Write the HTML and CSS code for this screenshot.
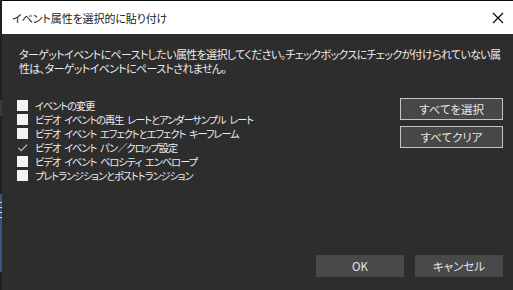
FILE: index.html
```html
<!DOCTYPE html>
<html lang="ja">
<head>
<meta charset="utf-8">
<link rel="stylesheet" href="styles.css">
</head>
<body>
<div class="edge">
  <div class="edge-a"></div>
  <div class="edge-b"></div>
  <div class="edge-c"></div>
  <div class="edge-d"><i></i><i></i><i></i><i></i></div>
</div>
<div class="dialog">
  <div class="titlebar">
    <span class="title">イベント属性を選択的に貼り付け</span>
    <svg class="close" width="12" height="12" viewBox="0 0 12 12"><path d="M1 1 L11 11 M11 1 L1 11" stroke="#000" stroke-width="1.1" fill="none"/></svg>
  </div>
  <div class="content">
    <p class="desc">ターゲットイベントにペーストしたい属性を選択してください。チェックボックスにチェックが付けられていない属<br>性は、ターゲットイベントにペーストされません。</p>
    <div class="main">
      <ul class="list">
        <li><span class="box"></span>イベントの変更</li>
        <li><span class="box"></span>ビデオ イベントの再生 レートとアンダーサンプル レート</li>
        <li><span class="box"></span>ビデオ イベント エフェクトとエフェクト キーフレーム</li>
        <li><span class="box checked"><svg width="12" height="11" viewBox="0 0 12 11"><path d="M1.5 6 L4.5 9 L11 2.5" stroke="#bdbdbd" stroke-width="1.2" fill="none"/></svg></span>ビデオ イベント パン／クロップ設定</li>
        <li><span class="box"></span>ビデオ イベント ベロシティ エンベロープ</li>
        <li><span class="box"></span>プレトランジションとポストトランジション</li>
      </ul>
      <div class="side">
        <button class="btn outline">すべてを選択</button>
        <button class="btn outline">すべてクリア</button>
      </div>
    </div>
    <div class="footer">
      <button class="btn">OK</button>
      <button class="btn">キャンセル</button>
    </div>
  </div>
</div>
</body>
</html>
```
FILE: styles.css
```css
html, body {
  margin: 0;
  padding: 0;
}
body {
  width: 513px;
  height: 290px;
  display: flex;
  background: #1c1c1c;
  overflow: hidden;
  font-family: "Noto Sans CJK JP", "Noto Sans", sans-serif;
  font-feature-settings: "palt";
}
.edge {
  width: 2px;
  flex: none;
  display: flex;
  flex-direction: column;
  background: #202020;
}
.edge-a { height: 100px; }
.edge-b { height: 16px; background: #3a3a3a; }
.edge-c { height: 78px; }
.edge-d {
  height: 70px;
  background: #3d5183;
  display: flex;
  flex-direction: column;
  gap: 4px;
  padding-top: 8px;
}
.edge-d i {
  display: block;
  height: 1px;
  background: #d0d0d0;
}
.dialog {
  flex: 1;
  min-width: 0;
  overflow: hidden;
  display: flex;
  flex-direction: column;
  border-top: 1px solid #0a0a0a;
}
.titlebar {
  height: 33px;
  background: #ffffff;
  display: flex;
  align-items: center;
  justify-content: space-between;
  padding: 0 9px 0 10px;
}
.title {
  font-size: 11px;
  color: #1a1a1a;
  letter-spacing: -0.1px;
}
.close {
  display: block;
}
.content {
  flex: 1;
  min-width: 0;
  background: #2d2d2d;
  display: flex;
  flex-direction: column;
  padding: 13px 10px 13px 17px;
  color: #ececec;
  font-size: 11px;
}
.desc {
  margin: 0;
  line-height: 14px;
  white-space: nowrap;
  letter-spacing: -0.65px;
}
.main {
  display: flex;
  justify-content: space-between;
  margin-top: 23px;
}
.list {
  list-style: none;
  margin: 1px 0 0 -2px;
  padding: 0;
}
.list li {
  display: flex;
  align-items: center;
  height: 13.9px;
  white-space: pre;
  font-size: 10.2px;
  letter-spacing: -1px;
  word-spacing: 2.5px;
}
.box {
  flex: none;
  width: 11px;
  height: 11px;
  background: #f3f3f3;
  margin-right: 7px;
  display: flex;
}
.box.checked {
  background: transparent;
}
.side {
  display: flex;
  flex-direction: column;
  gap: 6px;
  margin-top: 0;
}
.btn {
  font-family: inherit;
  font-feature-settings: "palt";
  font-size: 11.5px;
  color: #e6e6e6;
  background: #494949;
  border: none;
  width: 88px;
  height: 22px;
  padding: 0;
  margin: 0;
  line-height: 22px;
}
.btn.outline {
  width: 103px;
  border: 1px solid #c4c4c4;
  background: #474747;
  line-height: 20px;
}
.footer {
  margin-top: auto;
  display: flex;
  justify-content: flex-end;
  gap: 11px;
}
```
